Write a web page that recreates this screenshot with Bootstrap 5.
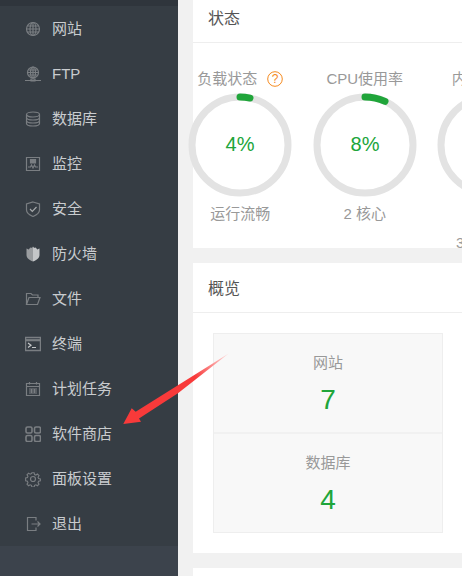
<!DOCTYPE html>
<html lang="zh-CN">
<head>
    <meta charset="UTF-8">
    <meta name="viewport" content="width=device-width, initial-scale=1.0">
    <title>面板首页</title>

    <!-- Bootstrap CSS -->
    <link href="https://cdn.jsdelivr.net/npm/bootstrap@5.3.0/dist/css/bootstrap.min.css" rel="stylesheet">
    <style>
        html, body { height: 100%; }
        body {
            overflow: hidden;
            background: #f1f1f1;
            font-family: "Liberation Sans", "Noto Sans CJK SC", sans-serif;
            font-size: 15px;
        }
        .page-wrap { width: 462px; height: 576px; overflow: hidden; }

        /* sidebar */
        .side-bar { width: 178px; height: 576px; flex: none; background: #3c434c; }
        .side-top { height: 6px; background: #2f353c; }
        .side-menu { background: #363d44; }
        .side-item {
            height: 45px;
            padding: 1px 0 0 25px;
            color: #c9cccf;
            text-decoration: none;
        }
        .side-item svg { width: 16px; height: 16px; margin-right: 11px; flex: none; fill: none; stroke: #7a7e82; stroke-width: 1.2; }
        .side-item svg.grid-icon { stroke-width: 1.6; }

        /* main column */
        .main-col { width: 284px; flex: none; padding-left: 15px; }
        .panel-box { width: 400px; flex: none; background: #fff; border: 0; border-radius: 0; }
        .panel-status { height: 248px; }
        .panel-over { height: 290px; margin-top: 15px; }
        .panel-next { height: 40px; margin-top: 15px; }
        .panel-head { height: 50px; padding: 2px 0 0 15px; color: #555; font-size: 16px; border-bottom: 1px solid #eee; }
        .panel-status .panel-head { height: 43px; padding: 0 0 4px 15px; }

        .gauge-row { margin-left: -15px; padding-top: 25px; }
        .gauge-col { width: 124.5px; flex: none; text-align: center; color: #999; }
        .gauge-title { height: 22px; line-height: 22px; white-space: nowrap; }
        .gauge-svg { width: 106px; height: 106px; display: block; margin: 2px auto 0; }
        .gauge-svg text { fill: #20a53a; font-size: 20px; font-family: "Liberation Sans", sans-serif; }
        .gauge-foot { margin-top: 5px; line-height: 22px; white-space: nowrap; }
        .gauge-extra { line-height: 22px; margin-top: 34px; white-space: nowrap; padding-left: 29px; text-align: left; }
        .help-mark { width: 16px; height: 16px; margin-left: 10px; vertical-align: -3px; }

        .stat-box { width: 230px; margin: 20px 0 0 20px; background: #f8f8f8; border: 1px solid #eee; }
        .stat-cell { height: 98px; padding-top: 19px; color: #999; text-align: center; line-height: 20px; }
        .stat-cell + .stat-cell { height: 100px; border-top: 2px solid #f1f1f1; }
        .stat-num { color: #20a53a; font-size: 28px; line-height: 32px; margin-top: 11px; }

        .red-arrow { position: absolute; left: 115px; top: 345px; width: 125px; height: 90px; }
    </style>
</head>
<body>

    <div class="page-wrap d-flex position-relative">

        <!-- Sidebar -->
        <nav class="side-bar">
            <div class="side-top"></div>
            <div class="side-menu">
                <a class="side-item d-flex align-items-center" href="#">
                    <svg viewBox="0 0 16 16"><circle cx="8" cy="8" r="6.500"/><ellipse cx="8" cy="8" rx="3" ry="6.500"/><path d="M8 1.500v13M1.500 8h13M2.500 5h11M2.500 11h11"/></svg>
                    网站
                </a>
                <a class="side-item d-flex align-items-center" href="#">
                    <svg viewBox="0 0 16 16"><circle cx="8" cy="6.500" r="5.500"/><ellipse cx="8" cy="6.500" rx="2.500" ry="5.500"/><path d="M8 1v11M2.500 6.500h11M3.500 4h9M3.500 9h9M0 14.500h16M6 15h4v-2H6z"/></svg>
                    FTP
                </a>
                <a class="side-item d-flex align-items-center" href="#">
                    <svg viewBox="0 0 16 16"><ellipse cx="8" cy="3.500" rx="6.500" ry="2.500"/><path d="M1.500 3.500v9c0 1.400 2.900 2.500 6.500 2.500s6.500-1.100 6.500-2.500v-9M1.500 6.500c0 1.400 2.900 2.500 6.500 2.500s6.500-1.100 6.500-2.500M1.500 9.500c0 1.400 2.900 2.500 6.500 2.500s6.500-1.100 6.500-2.500"/></svg>
                    数据库
                </a>
                <a class="side-item d-flex align-items-center" href="#">
                    <svg viewBox="0 0 16 16"><path d="M1.500 1.500h13v13h-13z"/><path d="M5.500 3.500h5v3.500h-5z" fill="#7a7e82"/><path d="M3 11h2.500l1-2 1.500 3 1.500-3 1 2H13"/></svg>
                    监控
                </a>
                <a class="side-item d-flex align-items-center" href="#">
                    <svg viewBox="0 0 16 16"><path d="M8 1 14.500 3v6c0 3-3 5-6.500 6.500C4.500 14 1.500 12 1.500 9V3z"/><path d="M5 8l2.300 2.300L11.500 6" stroke="#a6a9ab"/></svg>
                    安全
                </a>
                <a class="side-item d-flex align-items-center" href="#">
                    <svg viewBox="0 0 16 16"><path d="M8 .5v15C4 14 1.500 12 1.500 9V2.500c1 0 1.500 1 2 1S5 1.500 5.500 1.500 7 2.500 8 .5z" fill="#9a9da0" stroke="none"/><path d="M8 .5c1 2 2 1 2.500 1s1.500 2 2 2 1-1 2-1V9c0 3-2.500 5-6.500 6.500z" fill="#c4c6c8" stroke="none"/></svg>
                    防火墙
                </a>
                <a class="side-item d-flex align-items-center" href="#">
                    <svg viewBox="0 0 16 16"><path d="M1.500 13.500V2.500h4.500l1.500 1.500H13V6.500M1.500 13.500h11l2.500-7H4z"/></svg>
                    文件
                </a>
                <a class="side-item d-flex align-items-center" href="#">
                    <svg viewBox="0 0 16 16"><path d="M.5 1.500h15v13H.5z" stroke-width="1.500"/><path d="M.5 4.200h15" stroke-width="2.200"/><path d="M3 7l3 2.200-3 2.300M7 11.500h4" stroke="#c4c6c8"/></svg>
                    终端
                </a>
                <a class="side-item d-flex align-items-center" href="#">
                    <svg viewBox="0 0 16 16"><path d="M1.500 2.500h13v12h-13zM1.500 5.500h13M4.500 1v2.500M11.500 1v2.500M4 8h8M4 10h8M4 12h8M6.500 7.500v5M9.500 7.500v5"/></svg>
                    计划任务
                </a>
                <a class="side-item d-flex align-items-center" href="#">
                    <svg class="grid-icon" viewBox="0 0 16 16"><rect x="1" y="1" width="6" height="6" rx="1.500"/><rect x="9.500" y="1" width="6" height="6" rx="1.500"/><rect x="1" y="9.500" width="6" height="6" rx="1.500"/><rect x="9.500" y="9.500" width="6" height="6" rx="1.500"/></svg>
                    软件商店
                </a>
                <a class="side-item d-flex align-items-center" href="#">
                    <svg viewBox="0 0 16 16"><circle cx="8" cy="8" r="2.500"/><path d="M6.700 1h2.600l.4 2 1.500.6 1.700-1.100 1.800 1.800-1.100 1.700.6 1.500 2 .4v2.200l-2 .4-.6 1.500 1.100 1.700-1.800 1.800-1.700-1.100-1.500.6-.4 2H6.700l-.4-2-1.500-.6-1.700 1.100-1.800-1.800 1.100-1.700-.6-1.500-2-.4V6.900l2-.4.6-1.500L1.300 3.300l1.800-1.800 1.700 1.100 1.500-.6z" transform="translate(.8 .8) scale(.9)"/></svg>
                    面板设置
                </a>
                <a class="side-item d-flex align-items-center" href="#">
                    <svg viewBox="0 0 16 16"><path d="M11 4.500V1.500H2.500v13H11v-3M6.500 8H15M12.500 5.500 15 8l-2.500 2.500"/></svg>
                    退出
                </a>
            </div>
        </nav>

        <!-- Main -->
        <main class="main-col">
            <div class="card panel-box panel-status">
                <div class="panel-head flex-shrink-0 d-flex align-items-center">状态</div>
                <div class="gauge-row flex-shrink-0 d-flex">
                    <div class="gauge-col">
                        <div class="gauge-title">负载状态<svg class="help-mark" viewBox="0 0 16 16"><circle cx="8" cy="8" r="7.300" fill="none" stroke="#f58a1f"/><text x="8" y="12" text-anchor="middle" font-size="12" fill="#f58a1f">?</text></svg></div>
                        <svg class="gauge-svg" viewBox="0 0 106 106">
                            <circle cx="53" cy="53" r="48" fill="none" stroke="#e3e3e3" stroke-width="7"/>
                            <path d="M53 5A48 48 0 0 1 63 6.050" fill="none" stroke="#20a53a" stroke-width="7" stroke-linecap="round"/>
                            <text x="53" y="59" text-anchor="middle">4%</text>
                        </svg>
                        <div class="gauge-foot">运行流畅</div>
                    </div>
                    <div class="gauge-col">
                        <div class="gauge-title">CPU使用率</div>
                        <svg class="gauge-svg" viewBox="0 0 106 106">
                            <circle cx="53" cy="53" r="48" fill="none" stroke="#e3e3e3" stroke-width="7"/>
                            <path d="M53 5A48 48 0 0 1 73 9.400" fill="none" stroke="#20a53a" stroke-width="7" stroke-linecap="round"/>
                            <text x="53" y="59" text-anchor="middle">8%</text>
                        </svg>
                        <div class="gauge-foot">2 核心</div>
                    </div>
                    <div class="gauge-col">
                        <div class="gauge-title">内存使用率</div>
                        <svg class="gauge-svg" viewBox="0 0 106 106">
                            <circle cx="53" cy="53" r="48" fill="none" stroke="#e3e3e3" stroke-width="7"/>
                        </svg>
                        <div class="gauge-extra">3</div>
                    </div>
                </div>
            </div>

            <div class="card panel-box panel-over">
                <div class="panel-head flex-shrink-0 d-flex align-items-center">概览</div>
                <div class="stat-box">
                    <div class="stat-cell">
                        <div>网站</div>
                        <div class="stat-num">7</div>
                    </div>
                    <div class="stat-cell">
                        <div>数据库</div>
                        <div class="stat-num">4</div>
                    </div>
                </div>
            </div>

            <div class="card panel-box panel-next"></div>
        </main>

        <!-- Annotation arrow drawn over the screenshot -->
        <svg class="red-arrow" viewBox="115 345 125 90">
            <defs>
                <linearGradient id="arrowFade" x1="229" y1="353" x2="195" y2="377" gradientUnits="userSpaceOnUse">
                    <stop offset="0" stop-color="#ffe0e0"/>
                    <stop offset="1" stop-color="#f83a3a"/>
                </linearGradient>
            </defs>
            <path d="M123.300 424 131.700 408.300 135.700 411.700 229 353.300 178.300 393 139 418.500 141 421.700z" fill="url(#arrowFade)"/>
        </svg>
    </div>

    <!-- Bootstrap JS -->
    <script src="https://cdn.jsdelivr.net/npm/bootstrap@5.3.0/dist/js/bootstrap.bundle.min.js"></script>
</body>
</html>
